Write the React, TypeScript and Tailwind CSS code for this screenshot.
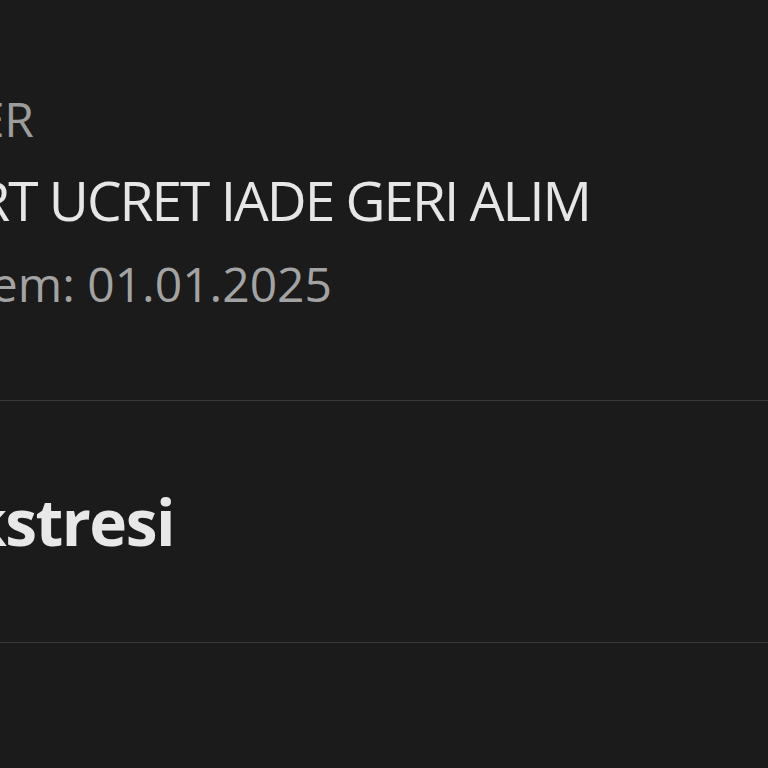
export default function App() {
  return (
    <div
      className="w-[768px] h-[768px] overflow-hidden bg-[#1b1b1b]"
      style={{ fontFamily: '"Open Sans", "Noto Sans", sans-serif' }}
    >
      <div className="pt-[86px] pb-[84px] border-b border-[#3a3a3a]">
        <div className="w-[34px] overflow-hidden flex justify-end">
          <span className="whitespace-nowrap text-[48px] leading-[65px] text-[#9c9c9c]">İŞLEMLER</span>
        </div>
        <div className="mt-[11px] w-[590px] overflow-hidden flex justify-end">
          <span className="whitespace-nowrap text-[55px] leading-[76px] tracking-[-2px] text-[#e6e6e6]">KART UCRET IADE GERI ALIM</span>
        </div>
        <div className="mt-[13px] w-[332px] overflow-hidden flex justify-end">
          <span className="whitespace-nowrap text-[48px] leading-[65px] text-[#a3a3a3]">Son İşlem: 01.01.2025</span>
        </div>
      </div>
      <div className="h-[242px] flex items-center border-b border-[#3a3a3a]">
        <div className="w-[174px] overflow-hidden flex justify-end">
          <span className="whitespace-nowrap text-[64px] leading-[87px] font-bold tracking-[-1.5px] text-[#e8e8e8]">Hesap Ekstresi</span>
        </div>
      </div>
    </div>
  );
}
